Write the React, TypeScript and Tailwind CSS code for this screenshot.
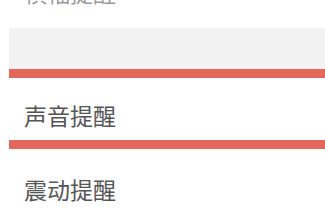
export default function App() {
  const font = { fontFamily: '"Noto Sans CJK SC", "Noto Sans", sans-serif' };
  return (
    <div className="w-[325px] h-[224px] overflow-hidden bg-white" style={font}>
      <div className="h-[28px] relative overflow-hidden">
        <div className="absolute left-6 top-[-19px] text-[23px] leading-[23px] text-[#9a9a9a]">横幅提醒</div>
      </div>
      <div className="ml-[9px] h-[41px] bg-[#f2f2f2]" />
      <div className="ml-[9px] h-[9px] bg-[#e3685b]" />
      <div className="h-[62px] flex items-end pb-[13px] pl-6 text-[23px] leading-[23px] text-[#555555]">
        声音提醒
      </div>
      <div className="ml-[9px] h-[9px] bg-[#e3685b]" />
      <div className="h-[75px] flex items-start pt-[29px] pl-6 text-[23px] leading-[23px] text-[#555555]">
        震动提醒
      </div>
    </div>
  );
}
